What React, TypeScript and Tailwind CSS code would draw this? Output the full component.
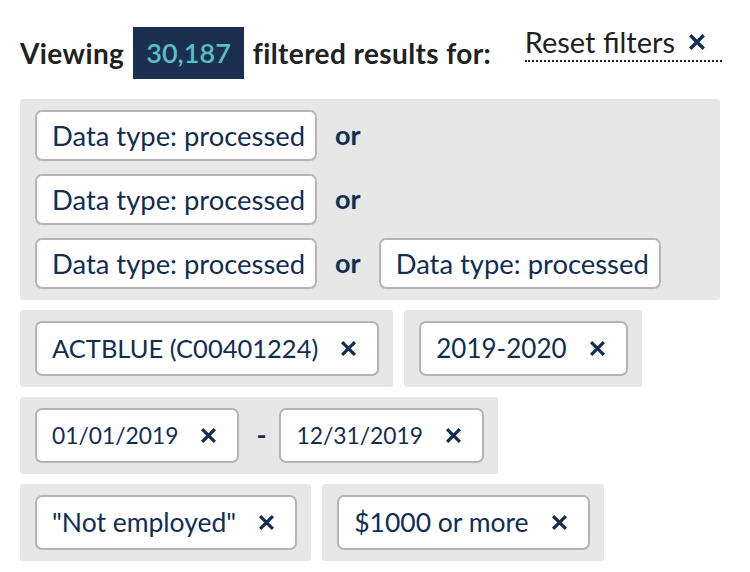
import React from 'react';

const font = { fontFamily: 'Lato, "Open Sans", sans-serif' };

function XIcon({ size = 17 }: { size?: number }) {
  return (
    <svg width={size} height={size} viewBox="0 0 16 16" className="shrink-0">
      <path d="M2 2 L14 14 M14 2 L2 14" stroke="#112e51" strokeWidth="3" strokeLinecap="butt" />
    </svg>
  );
}

function Tag({ label, removable = true, size = 'text-[26.5px]' }: { label: string; removable?: boolean; size?: string }) {
  return (
    <div
      className={`flex items-center bg-white border-2 border-[#b4b4b4] rounded-[7px] text-[#112e51] pl-[15px] ${
        removable ? 'h-[55px] pr-[20px]' : 'h-[51px] pr-[10px]'
      }`}
    >
      <span className={size}>{label}</span>
      {removable && (
        <span className="ml-[22px] flex items-center">
          <XIcon />
        </span>
      )}
    </div>
  );
}

function Or() {
  return <span className="mx-[18px] text-[27px] font-bold text-[#112e51]">or</span>;
}

function Panel({ children }: { children: React.ReactNode }) {
  return (
    <div className="flex items-center bg-[#e7e7e7] rounded-[3px] pl-[15px] pr-[14px] py-[11px]">{children}</div>
  );
}

export default function App() {
  return (
    <div className="w-[750px] h-[572px] bg-white px-5 pt-[27px]" style={font}>
      <div className="flex items-start w-[702px]">
        <div className="flex items-center text-[28px] font-bold text-[#212121] tracking-[0.4px]">
          <span>Viewing</span>
          <span className="mx-[9px] h-[52px] px-[13px] flex items-center bg-[#1b2f50] text-[#5cbdc6] font-semibold text-[27px] tracking-normal">
            30,187
          </span>
          <span>filtered results for:</span>
        </div>
        <a className="ml-auto -mt-[2px] flex items-center gap-[13px] text-[29px] text-[#212121] border-b-2 border-dotted border-[#212121] pb-[1px] pr-[16px] leading-[34px]">
          <span>Reset filters</span>
          <XIcon size={18} />
        </a>
      </div>

      <div className="mt-[20px] w-[700px] bg-[#e7e7e7] rounded-[3px] px-[15px] py-[11px] flex flex-col gap-[13px]">
        <div className="flex items-center">
          <Tag label="Data type: processed" removable={false} size="text-[27.4px]" />
          <Or />
        </div>
        <div className="flex items-center">
          <Tag label="Data type: processed" removable={false} size="text-[27.4px]" />
          <Or />
        </div>
        <div className="flex items-center">
          <Tag label="Data type: processed" removable={false} size="text-[27.4px]" />
          <Or />
          <Tag label="Data type: processed" removable={false} size="text-[27.4px]" />
        </div>
      </div>

      <div className="mt-[10px] flex flex-col gap-[10px] items-start">
        <div className="flex gap-[11px]">
          <Panel>
            <Tag label="ACTBLUE (C00401224)" size="text-[25.5px]" />
          </Panel>
          <Panel>
            <Tag label="2019-2020" size="text-[26px]" />
          </Panel>
        </div>
        <div className="flex gap-[11px]">
          <Panel>
            <Tag label="01/01/2019" size="text-[22.8px]" />
            <span className="ml-[17px] mr-[13px] text-[27px] font-bold text-[#112e51]">-</span>
            <Tag label="12/31/2019" size="text-[22.8px]" />
          </Panel>
        </div>
        <div className="flex gap-[11px]">
          <Panel>
            <Tag label={'"Not employed"'} />
          </Panel>
          <Panel>
            <Tag label="$1000 or more" />
          </Panel>
        </div>
      </div>
    </div>
  );
}
